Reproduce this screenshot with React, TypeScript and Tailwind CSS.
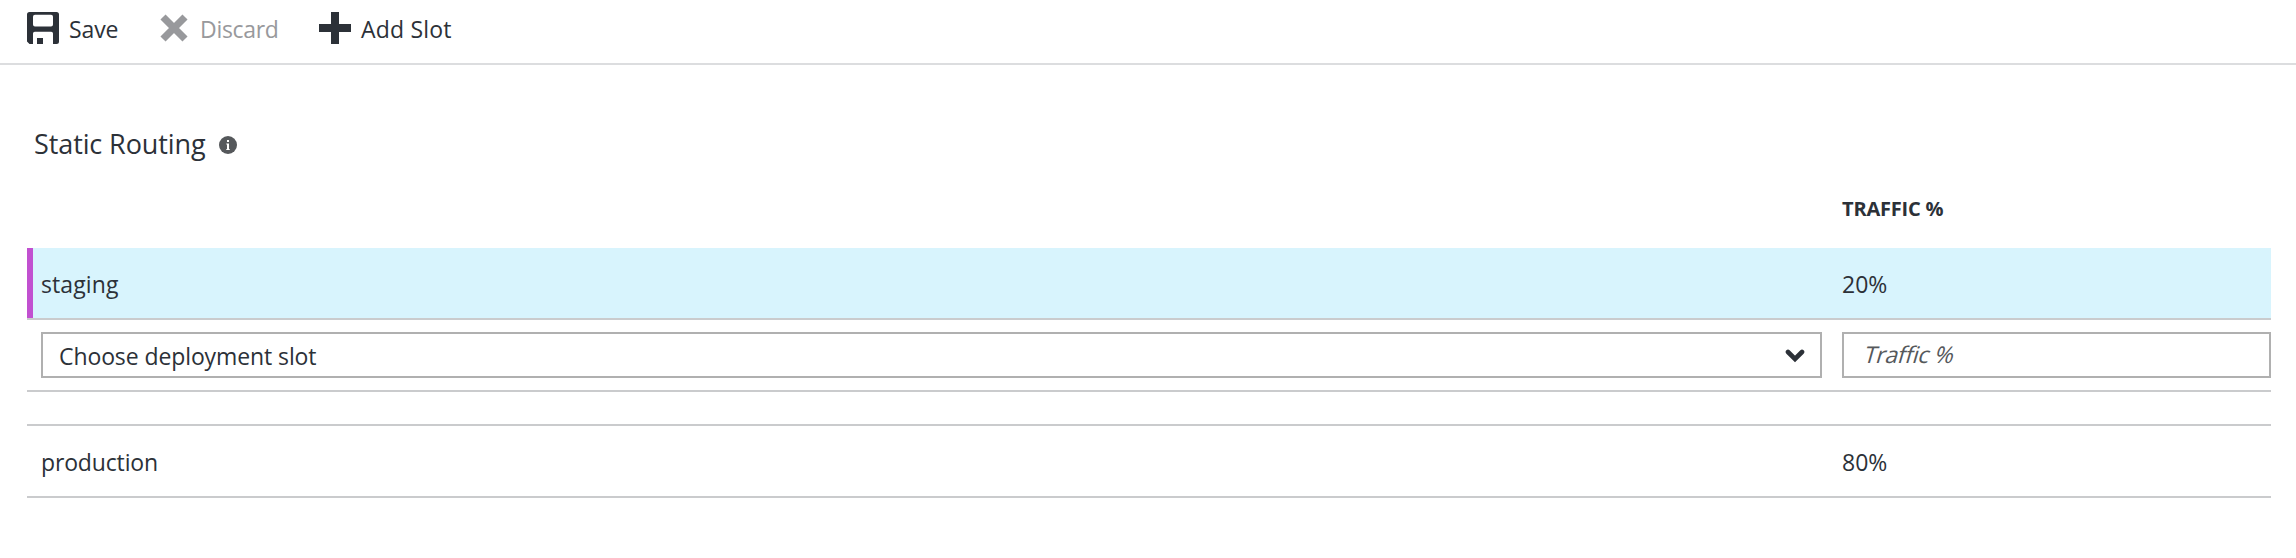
import React from 'react';

const SaveIcon = () => (
  <svg width="32" height="32" viewBox="0 0 32 32" className="block shrink-0">
    <path
      fillRule="evenodd"
      fill="#2c3138"
      d="M2.500 0H29.500Q32 0 32 2.500V29.500Q32 32 29.500 32H26V21.500Q26 19.700 24.200 19.700H7.800Q6 19.700 6 21.500V32H2.500L0 29.500V2.500Q0 0 2.500 0ZM8 2.800Q6 2.800 6 4.800V12.500Q6 14.500 8 14.500H24Q26 14.500 26 12.500V4.800Q26 2.800 24 2.800Z"
    />
    <rect x="10" y="26" width="6" height="6" fill="#2c3138" />
  </svg>
);

const DiscardIcon = () => (
  <svg width="28" height="28" viewBox="0 0 28 28" className="block shrink-0">
    <path d="M3 3L25 25M25 3L3 25" stroke="#98999c" strokeWidth="7.2" fill="none" />
  </svg>
);

const AddIcon = () => (
  <svg width="32" height="32" viewBox="0 0 32 32" className="block shrink-0">
    <path d="M12 0H20V12H32V20H20V32H12V20H0V12H12Z" fill="#2c3138" />
  </svg>
);

const InfoIcon = () => (
  <svg width="18" height="18" viewBox="0 0 18 18" className="block shrink-0">
    <circle cx="9" cy="9" r="9" fill="#55585b" />
    <path d="M8 4H10V6H8ZM7.300 7.500H10V13H10.700V14H7.300V13H8V8.500H7.300Z" fill="#fff" />
  </svg>
);

const Chevron = () => (
  <svg width="20" height="16" viewBox="0 0 20 16" className="block shrink-0">
    <path d="M3 5L10 12L17 5" stroke="#2c3138" strokeWidth="4.600" strokeLinecap="round" fill="none" />
  </svg>
);

export default function App() {
  return (
    <div className="h-[558px] w-[2296px] overflow-hidden bg-white font-['Open_Sans','Noto_Sans',sans-serif] text-[23px] leading-[32px] text-[#2c3138]">
      <header className="flex h-[65px] items-start border-b-2 border-[#dcdddf] pl-[27px] pt-3">
        <button className="flex">
          <SaveIcon />
          <span className="ml-[10px] w-[91px] pt-px text-left tracking-[-0.1px]">Save</span>
        </button>
        <button className="flex text-[#98999c]">
          <span className="pt-[2px]"><DiscardIcon /></span>
          <span className="ml-[12px] w-[119px] pt-px text-left tracking-[-0.3px]">Discard</span>
        </button>
        <button className="flex">
          <AddIcon />
          <span className="ml-[10px] whitespace-nowrap pt-px tracking-[0.2px]">Add Slot</span>
        </button>
      </header>

      <main className="pl-[27px] pr-[25px]">
        <h2 className="flex items-center pl-[7px] pt-[63px] text-[27px] leading-[32px]">
          <span className="w-[185px] whitespace-nowrap pb-[2px] tracking-[-0.1px]">Static Routing</span>
          <InfoIcon />
        </h2>

        <div className="flex h-[86px] items-center pl-[1815px] pt-[7px]">
          <span className="text-[20px] font-bold tracking-[-0.2px]">TRAFFIC %</span>
        </div>

        <div className="flex h-[72px] items-center border-b-2 border-[#cacbcd] bg-[#d8f4fd]">
          <span className="h-[70px] w-[6px] bg-[#c150d0]" />
          <span className="w-[1809px] pl-[8px] pt-[2px] tracking-[0.1px]">staging</span>
          <span className="pt-[2px]">20%</span>
        </div>

        <div className="flex h-[72px] items-center border-b-2 border-[#cacbcd] pl-[14px]">
          <div className="flex h-[46px] w-[1781px] items-center justify-between border-2 border-[#b0b0b0] pl-[16px] pr-[15px]">
            <span className="pt-[2px] tracking-[-0.1px]">Choose deployment slot</span>
            <Chevron />
          </div>
          <div className="ml-[20px] flex h-[46px] flex-1 items-center border-2 border-[#b0b0b0] pb-[2px] pl-[21px]">
            <span className="inline-block -skew-x-[16deg] tracking-[-0.3px] text-[#55585b] [font-variant-ligatures:none]">Traffic %</span>
          </div>
        </div>

        <div className="mt-8 flex h-[74px] items-center border-y-2 border-[#cacbcd]">
          <span className="w-[1815px] pl-[14px] pt-[2px] tracking-[-0.15px]">production</span>
          <span className="pt-[2px]">80%</span>
        </div>
      </main>
    </div>
  );
}
